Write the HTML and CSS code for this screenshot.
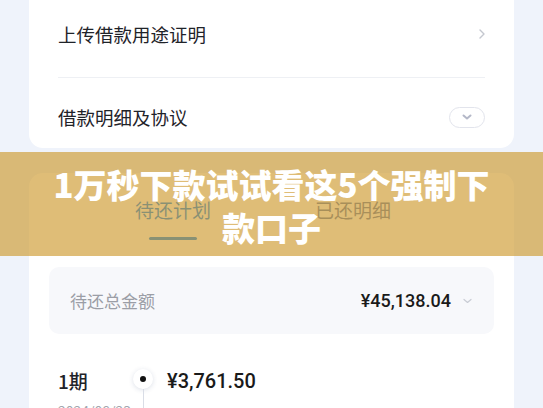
FILE: index.html
```html
<!DOCTYPE html>
<html lang="zh-CN">
<head>
  <meta charset="UTF-8">
  <meta name="viewport" content="width=device-width, initial-scale=1.0">
  <title>借款详情</title>
  <link rel="stylesheet" href="styles.css">
</head>
<body>

  <div class="page">
    <div class="card card-top">
      <div class="row row-first">
        <span class="row-title">上传借款用途证明</span>
        <svg class="arrow-right" width="8" height="12" viewBox="0 0 8 12">
          <path d="M2 2 L6 6 L2 10" fill="none" stroke="#c4c7cf" stroke-width="1.4" stroke-linecap="round" stroke-linejoin="round"/>
        </svg>
      </div>
      <div class="row row-last">
        <span class="row-title">借款明细及协议</span>
        <span class="pill">
          <svg width="12" height="8" viewBox="0 0 12 8">
            <path d="M2.5 2.5 L6 5.5 L9.5 2.5" fill="none" stroke="#b4b8c8" stroke-width="2" stroke-linecap="round" stroke-linejoin="round"/>
          </svg>
        </span>
      </div>
    </div>

    <div class="card card-plan">
      <div class="tabs">
        <div class="tab active">待还计划<i class="tab-line"></i></div>
        <div class="tab">已还明细</div>
      </div>

      <div class="total">
        <span class="total-label">待还总金额</span>
        <span class="total-right">
          <span class="money total-money">¥45,138.04</span>
          <svg width="9" height="6" viewBox="0 0 9 6">
            <path d="M1 1.5 L4.5 4.5 L8 1.5" fill="none" stroke="#c9ccd4" stroke-width="1.2" stroke-linecap="round" stroke-linejoin="round"/>
          </svg>
        </span>
      </div>

      <div class="term">
        <div class="term-name">1期</div>
        <div class="term-axis"><span class="dot"></span><span class="axis-line"></span></div>
        <div class="term-body">
          <div class="money term-money">¥3,761.50</div>
          <div class="term-sub">
            <span>本金 ¥3,600.00</span>
            <span>利息 ¥161.50</span>
          </div>
        </div>
      </div>
      <div class="term-date">2024/08/23</div>
    </div>
  </div>

  <div class="banner">
    <h2>1万秒下款试试看这5个强制下款口子</h2>
  </div>

</body>
</html>
```

FILE: styles.css
```css
body {
  margin: 0;
  background: #eff3fb;
  font-family: "Noto Sans CJK SC", "Noto Sans", sans-serif;
  color: #1f2329;
  overflow: hidden;
}

.page {
  padding: 0 29px;
}

.card {
  background: #fff;
  border-radius: 14px;
}

.card-top {
  border-radius: 0 0 14px 14px;
  padding: 0 29px;
}

.row {
  display: flex;
  justify-content: space-between;
  align-items: center;
  line-height: 22px;
}

.row-first {
  padding: 23px 0 32px;
  border-bottom: 1px solid #eef0f4;
}

.row-last {
  padding: 28px 0 20px;
}

.row-title {
  font-size: 18.5px;
}

.arrow-right {
  display: block;
  margin-right: -1px;
}

.pill {
  width: 34px;
  height: 19px;
  border: 1px solid #e2e4ec;
  border-radius: 11px;
  display: flex;
  align-items: center;
  justify-content: center;
}

.pill svg {
  display: block;
}

/* 还款计划 */
.card-plan {
  margin-top: 25px;
  padding: 0 20px;
  height: 300px;
}

.tabs {
  display: grid;
  grid-template-columns: 180px 180px;
  margin-left: 34px;
  padding-top: 25px;
}

.tab {
  display: flex;
  flex-direction: column;
  align-items: center;
  font-size: 19px;
  line-height: 24px;
  color: #6f86b4;
}

.tab.active {
  color: #1e8cf8;
}

.tab-line {
  width: 48px;
  height: 3px;
  margin-top: 15px;
  border-radius: 2px;
  background: #1e8cf8;
}

.total {
  margin-top: 27px;
  height: 67px;
  background: #f7f8fb;
  border-radius: 10px;
  display: flex;
  align-items: center;
  justify-content: space-between;
  padding: 0 22px 0 21px;
}

.total-label {
  font-size: 17px;
  color: #9b9ea6;
}

.total-right {
  display: flex;
  align-items: center;
  gap: 12px;
}

.money {
  font-family: "Roboto", "Noto Sans CJK SC", sans-serif;
  font-weight: 500;
  color: #1a1a1a;
}

.total-money {
  font-size: 18px;
}

.term {
  display: flex;
  margin-top: 35px;
  padding-left: 9px;
}

.term-name {
  width: 73px;
  font-size: 19px;
  line-height: 24px;
  font-weight: 500;
}

.term-axis {
  width: 24px;
  display: flex;
  flex-direction: column;
  align-items: center;
}

.dot {
  width: 20px;
  height: 20px;
  border-radius: 50%;
  background: #fff;
  box-shadow: 0 1px 5px rgba(40, 60, 110, 0.16);
  display: flex;
  align-items: center;
  justify-content: center;
}

.dot::after {
  content: "";
  width: 6px;
  height: 6px;
  border-radius: 50%;
  background: #111;
}

.axis-line {
  width: 1px;
  height: 40px;
  background: #d9dde6;
}

.term-body {
  margin-left: 12px;
}

.term-money {
  font-size: 20px;
  line-height: 24px;
}

.term-sub {
  margin-top: 12px;
  display: flex;
  gap: 44px;
  font-size: 14px;
  color: #a3a6ae;
}

.term-date {
  margin: -28px 0 0 9px;
  font-size: 14px;
  color: #a3a6ae;
}

/* 顶部横幅 */
.banner {
  position: absolute;
  top: 152px;
  left: 0;
  right: 0;
  height: 104px;
  background: rgba(204, 148, 36, 0.62);
  display: flex;
  align-items: center;
  justify-content: center;
  padding: 0 45px;
}

.banner h2 {
  margin: 4px 0 0;
  font-size: 33px;
  line-height: 43px;
  font-weight: 900;
  color: #fff;
  text-align: center;
}
```
